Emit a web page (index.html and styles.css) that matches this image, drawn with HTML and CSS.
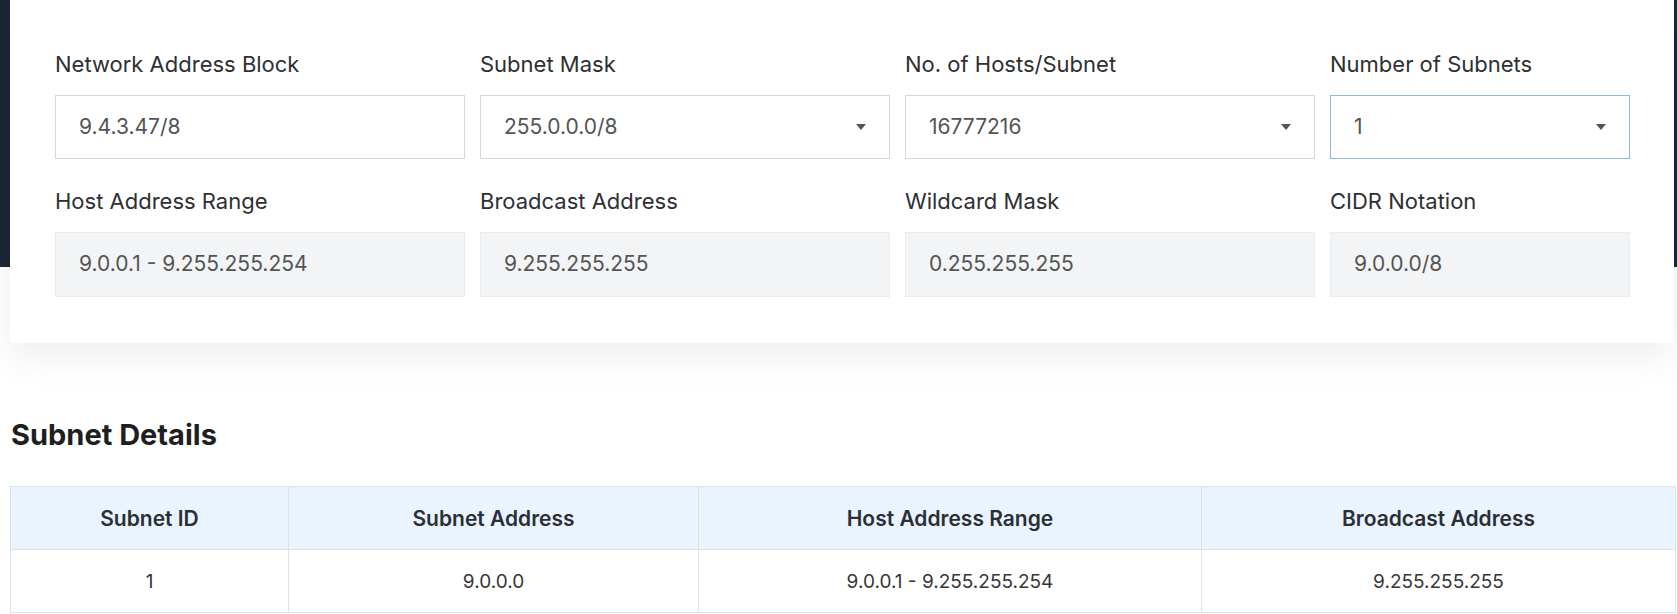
FILE: index.html
```html
<!DOCTYPE html>
<html lang="en">
<head>
<meta charset="utf-8">
<title>Subnet Calculator</title>
<link rel="stylesheet" href="styles.css">
</head>
<body>
<div class="page">
  <div class="container">
    <section class="card">
      <div class="grid">
        <div class="field">
          <label class="label">Network Address Block</label>
          <div class="box input">9.4.3.47/8</div>
        </div>
        <div class="field">
          <label class="label">Subnet Mask</label>
          <div class="box input select">255.0.0.0/8<span class="caret"></span></div>
        </div>
        <div class="field">
          <label class="label">No. of Hosts/Subnet</label>
          <div class="box input select">16777216<span class="caret"></span></div>
        </div>
        <div class="field">
          <label class="label">Number of Subnets</label>
          <div class="box input select focus">1<span class="caret"></span></div>
        </div>
        <div class="field">
          <label class="label">Host Address Range</label>
          <div class="box readonly">9.0.0.1 - 9.255.255.254</div>
        </div>
        <div class="field">
          <label class="label">Broadcast Address</label>
          <div class="box readonly">9.255.255.255</div>
        </div>
        <div class="field">
          <label class="label">Wildcard Mask</label>
          <div class="box readonly">0.255.255.255</div>
        </div>
        <div class="field">
          <label class="label">CIDR Notation</label>
          <div class="box readonly">9.0.0.0/8</div>
        </div>
      </div>
    </section>

    <h2 class="title">Subnet Details</h2>

    <table class="table">
      <colgroup>
        <col class="c1"><col class="c2"><col class="c3"><col class="c4">
      </colgroup>
      <thead>
        <tr>
          <th>Subnet ID</th>
          <th>Subnet Address</th>
          <th>Host Address Range</th>
          <th>Broadcast Address</th>
        </tr>
      </thead>
      <tbody>
        <tr>
          <td>1</td>
          <td>9.0.0.0</td>
          <td>9.0.0.1 - 9.255.255.254</td>
          <td>9.255.255.255</td>
        </tr>
      </tbody>
    </table>
  </div>
</div>
</body>
</html>
```
FILE: styles.css
```css
* { box-sizing: border-box; }
html, body { margin: 0; padding: 0; }
body {
  font-family: "Inter", "Liberation Sans", sans-serif;
  background: #ffffff;
  color: #2d2d2d;
  overflow: hidden;
}
.page {
  background: linear-gradient(#1b2637 0, #1b2637 267px, #ffffff 267px);
  min-height: 614px;
}
.container {
  margin-left: 10px;
  width: 1664px;
}
.card {
  background: #ffffff;
  padding: 50px 0 46px 45px;
  box-shadow: 0 14px 36px rgba(0, 0, 0, 0.07);
}
.grid {
  display: grid;
  grid-template-columns: 410px 410px 410px 300px;
  column-gap: 15px;
  row-gap: 28px;
}
.field { display: flex; flex-direction: column; }
.label {
  font-size: 22px;
  line-height: 28px;
  color: #2e3032;
  margin-bottom: 17px;
  white-space: nowrap;
}
.box {
  position: relative;
  height: 64px;
  display: flex;
  align-items: center;
  padding-left: 23px;
  padding-bottom: 2px;
  font-size: 21px;
  color: #545454;
}
.input {
  border: 1px solid #cfd9e4;
  background: #fff;
}
.input.focus { border-color: #8fb8e6; }
.readonly {
  height: 65px;
  padding-bottom: 3px;
  background: #f2f4f6;
  border: 1px solid #e8edf2;
}
.caret {
  position: absolute;
  right: 23px;
  top: 28px;
  width: 0;
  height: 0;
  border-left: 5px solid transparent;
  border-right: 5px solid transparent;
  border-top: 6px solid #555;
}
.title {
  margin: 74px 0 0 1px;
  font-size: 29px;
  line-height: 36px;
  font-weight: 700;
  color: #1e1f21;
}
.table {
  margin-top: 33px;
  width: 1665px;
  border-collapse: collapse;
  table-layout: fixed;
}
.c1 { width: 278px; }
.c2 { width: 410px; }
.c3 { width: 503px; }
.c4 { width: 474px; }
.table th, .table td {
  border: 1px solid #dbe2ea;
  height: 63px;
  text-align: center;
  padding: 0;
}
.table th {
  background: #eaf4fe;
  font-size: 21px;
  font-weight: 600;
  color: #2a2f36;
}
.table td {
  font-size: 19px;
  color: #363636;
  font-weight: 400;
}
```
